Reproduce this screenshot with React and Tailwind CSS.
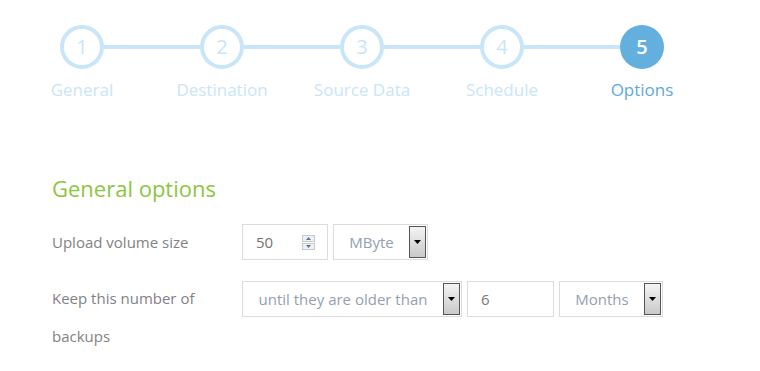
import React from "react";

const steps = ["General", "Destination", "Source Data", "Schedule", "Options"];

function DropBtn() {
  return (
    <div className="flex h-full w-[17px] shrink-0 items-center justify-center border border-[#555] bg-gradient-to-b from-[#f4f4f4] to-[#c9c9c9]">
      <svg width="7" height="4" viewBox="0 0 7 4"><path d="M0 0h7L3.5 4z" fill="#000" /></svg>
    </div>
  );
}

function Select({ w, text }) {
  return (
    <div className={`flex h-[36px] ${w} items-stretch border border-[#dcdcdc] bg-white`}>
      <div className="flex flex-1 items-center justify-center text-[15px] text-[#929fb2]">{text}</div>
      <div className="py-px pr-px"><DropBtn /></div>
    </div>
  );
}

export default function App() {
  return (
    <div className="h-[371px] w-[760px] bg-white" style={{ fontFamily: '"Open Sans", "DejaVu Sans", sans-serif' }}>
      <div className="flex pl-[12px] pt-[25px]">
        {steps.map((s, i) => {
          const active = i === 4;
          return (
            <div key={s} className="flex w-[140px] flex-col items-center">
              <div className="flex w-full items-center">
                <div className={`h-[4px] flex-1 ${i === 0 ? "" : "bg-[#c9e5f8]"}`} />
                <div
                  className={`flex h-[44px] w-[44px] items-center justify-center rounded-full text-[20px] ${
                    active ? "bg-[#63b0de] font-semibold text-white" : "border-[4px] border-[#c9e5f8] text-[#c9e5f8]"
                  }`}
                >
                  {i + 1}
                </div>
                <div className={`h-[4px] flex-1 ${i === 4 ? "" : "bg-[#c9e5f8]"}`} />
              </div>
              <div className={`mt-[10px] text-[17px] leading-[22px] ${active ? "text-[#62a9d8]" : "text-[#cae5f7]"}`}>{s}</div>
            </div>
          );
        })}
      </div>

      <div className="pl-[52px]">
        <div className="mt-[72px] text-[22px] leading-[30px] text-[#8cc63e]">General options</div>

        <div className="mt-[21px] flex items-center">
          <div className="w-[190px] text-[15px] text-[#828282]">Upload volume size</div>
          <div className="flex gap-[5px]">
            <div className="flex h-[36px] w-[86px] items-center border border-[#dcdcdc] bg-white pl-[13px] pr-[12px]">
              <span className="flex-1 text-[15px] text-[#737373]">50</span>
              <div className="flex flex-col gap-px">
                <div className="flex h-[7px] w-[13px] items-center justify-center border border-[#c8c8c8] bg-[#eef0f4]">
                  <svg width="5" height="3" viewBox="0 0 5 3"><path d="M0 3h5L2.5 0z" fill="#5872a8" /></svg>
                </div>
                <div className="flex h-[7px] w-[13px] items-center justify-center border border-[#c8c8c8] bg-[#eef0f4]">
                  <svg width="5" height="3" viewBox="0 0 5 3"><path d="M0 0h5L2.5 3z" fill="#5872a8" /></svg>
                </div>
              </div>
            </div>
            <Select w="w-[95px]" text="MByte" />
          </div>
        </div>

        <div className="mt-[19px] flex items-start">
          <div className="w-[190px] text-[15px] leading-[38px] text-[#828282]">
            Keep this number of
            <br />
            backups
          </div>
          <div className="mt-[2px] flex gap-[5px]">
            <Select w="w-[220px]" text="until they are older than" />
            <div className="flex h-[36px] w-[87px] items-center border border-[#dcdcdc] bg-white pl-[13px] text-[15px] text-[#7a7a7a]">6</div>
            <Select w="w-[104px]" text="Months" />
          </div>
        </div>
      </div>
    </div>
  );
}
